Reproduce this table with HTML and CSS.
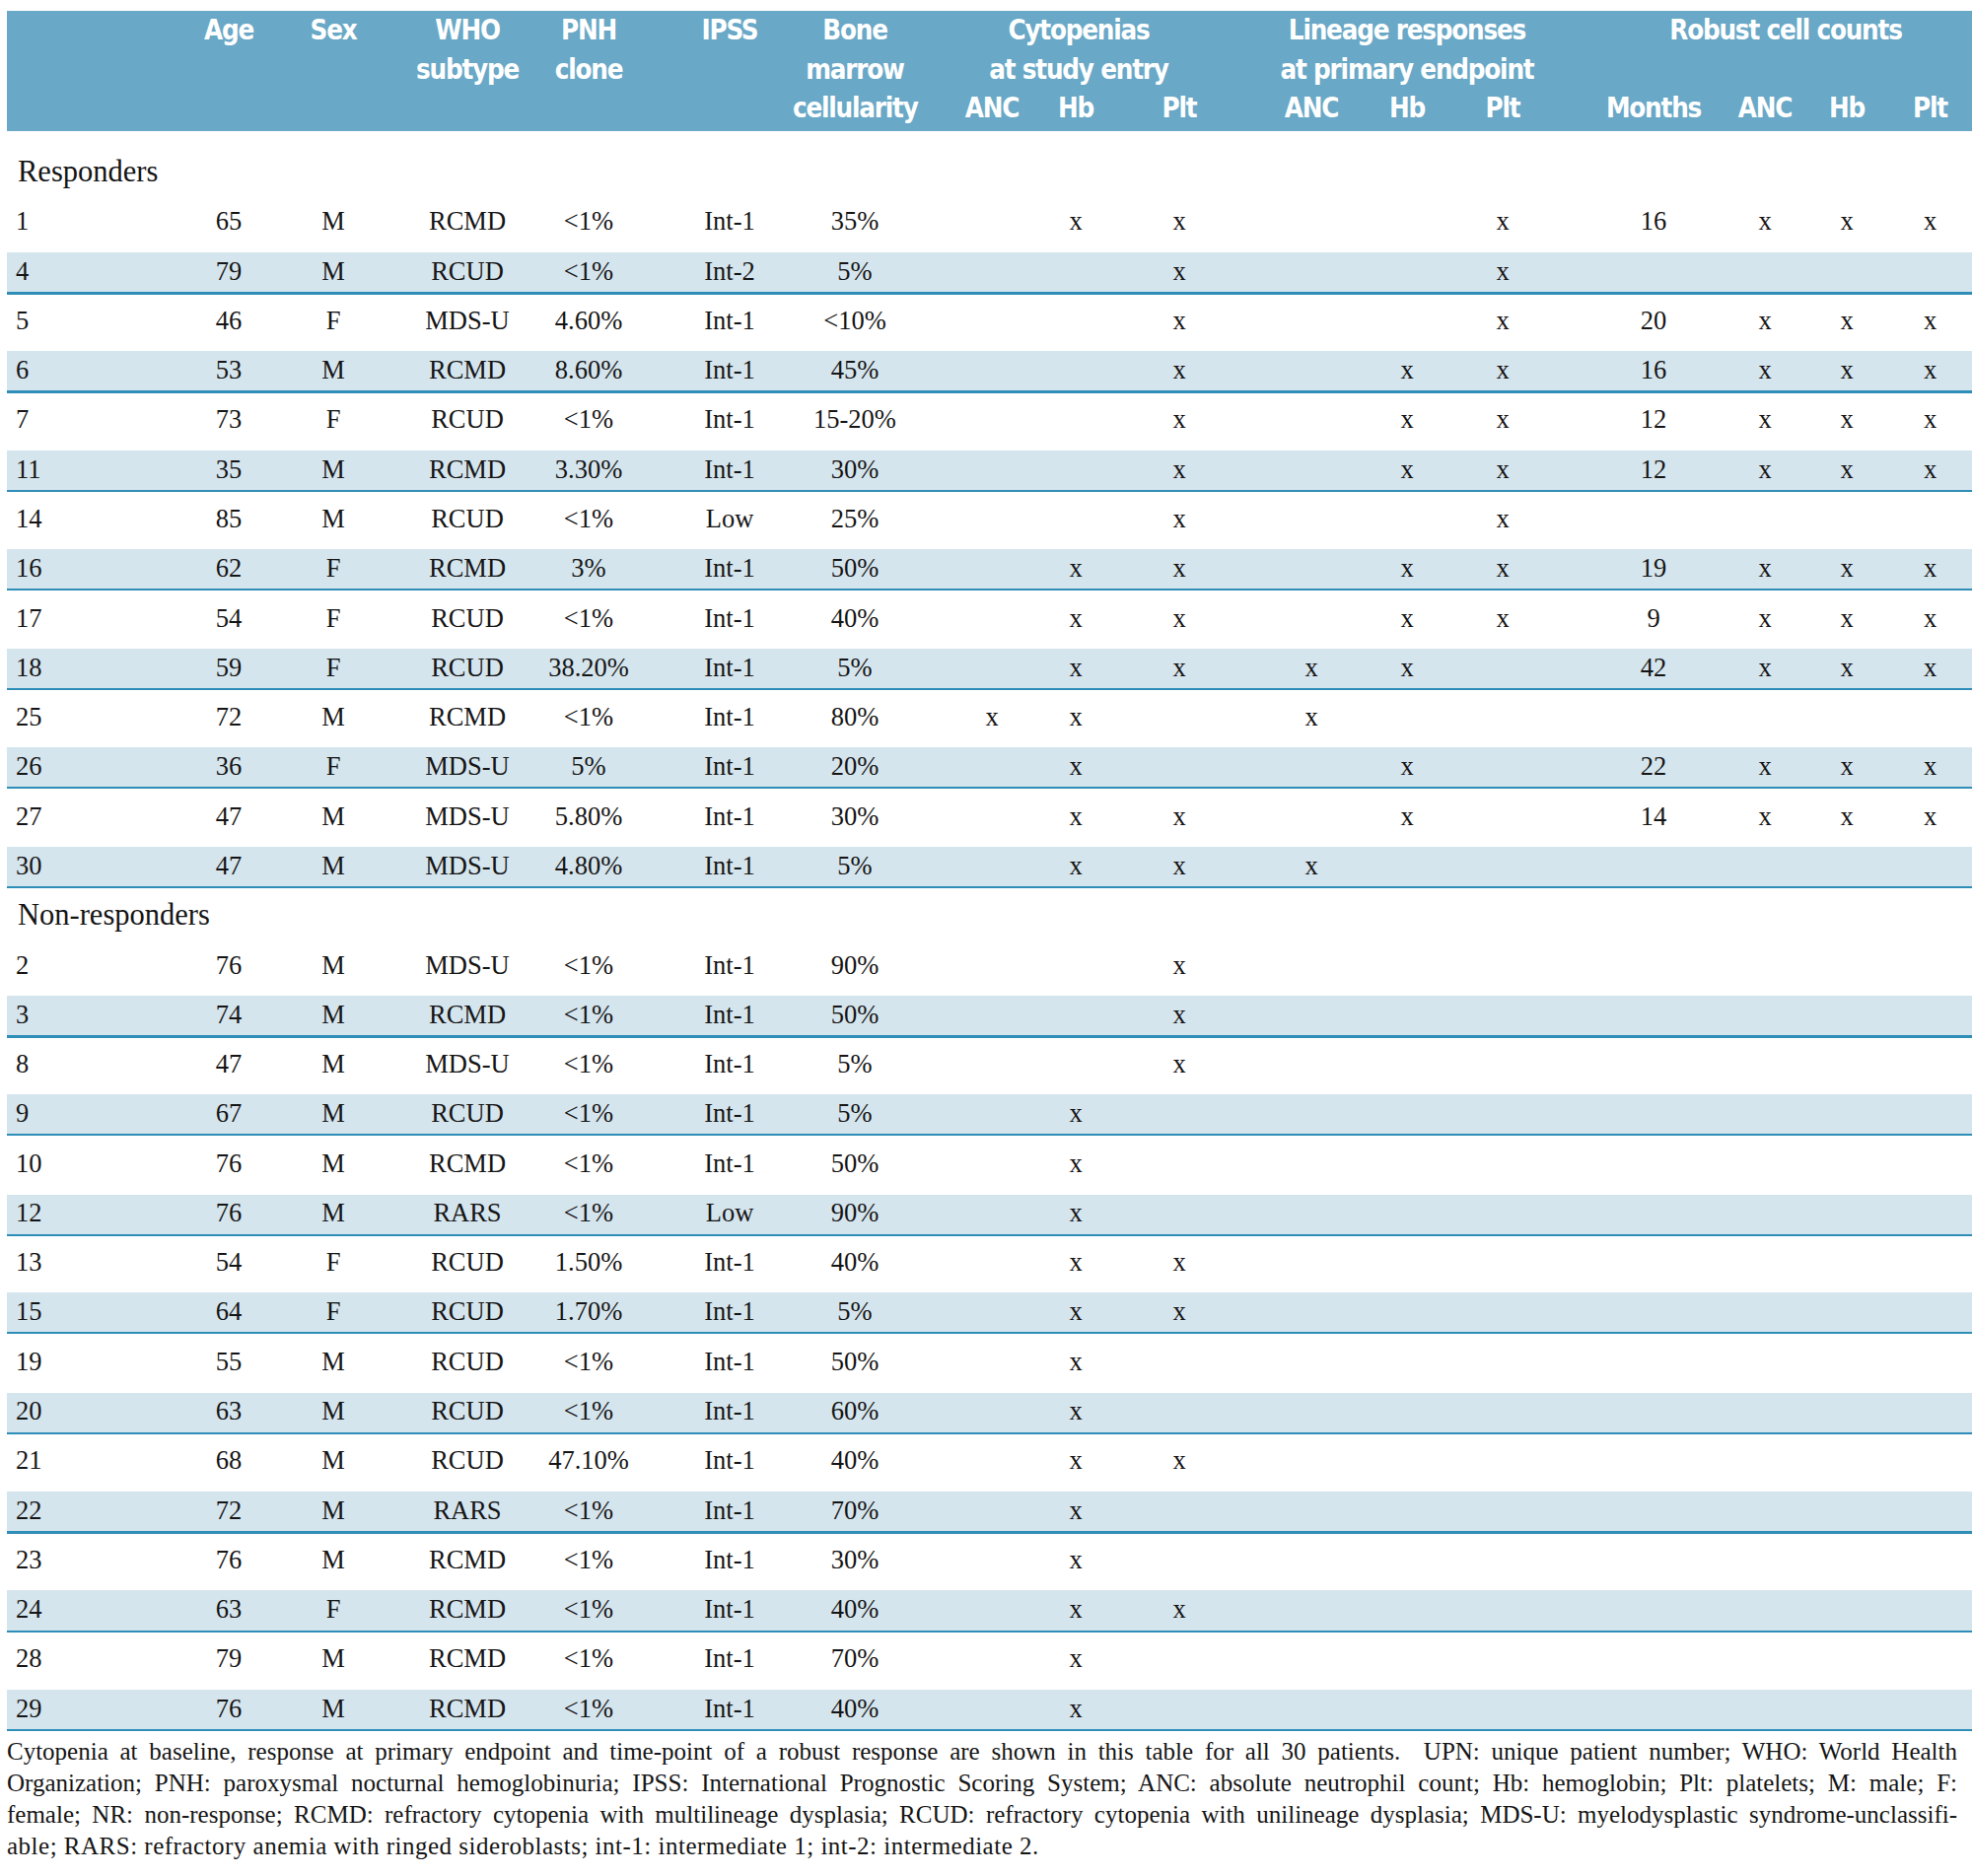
FILE: index.html
```html
<!DOCTYPE html>
<html lang="en">
<head>
<meta charset="utf-8">
<title>Patient responses</title>
<link rel="stylesheet" href="styles.css">
</head>
<body>
<div class="table">
  <div class="head cols">
    <div></div>
    <div>Age</div>
    <div>Sex</div>
    <div>WHO<br>subtype</div>
    <div>PNH<br>clone</div>
    <div>IPSS</div>
    <div>Bone<br>marrow<br>cellularity</div>
    <div class="grp g-cyt">
      <div class="gt">Cytopenias<br>at study entry</div>
      <div class="cyt-anc">ANC</div><div class="cyt-hb">Hb</div><div class="cyt-plt">Plt</div>
    </div>
    <div class="grp g-lin">
      <div class="gt">Lineage responses<br>at primary endpoint</div>
      <div class="lin-anc">ANC</div><div>Hb</div><div class="lin-plt">Plt</div>
    </div>
    <div class="grp g-rob">
      <div class="gt gt-rob">Robust cell counts</div>
      <div class="rob-mo">Months</div><div class="rob-anc">ANC</div><div>Hb</div><div>Plt</div>
    </div>
  </div>

  <div class="body">
    <div class="label">Responders</div>
    <div class="row cols"><span>1</span><span>65</span><span>M</span><span>RCMD</span><span>&lt;1%</span><span>Int-1</span><span>35%</span><span></span><span>x</span><span>x</span><span></span><span></span><span>x</span><span>16</span><span>x</span><span>x</span><span>x</span></div>
    <div class="row cols alt"><span>4</span><span>79</span><span>M</span><span>RCUD</span><span>&lt;1%</span><span>Int-2</span><span>5%</span><span></span><span></span><span>x</span><span></span><span></span><span>x</span></div>
    <div class="row cols"><span>5</span><span>46</span><span>F</span><span>MDS-U</span><span>4.60%</span><span>Int-1</span><span>&lt;10%</span><span></span><span></span><span>x</span><span></span><span></span><span>x</span><span>20</span><span>x</span><span>x</span><span>x</span></div>
    <div class="row cols alt"><span>6</span><span>53</span><span>M</span><span>RCMD</span><span>8.60%</span><span>Int-1</span><span>45%</span><span></span><span></span><span>x</span><span></span><span>x</span><span>x</span><span>16</span><span>x</span><span>x</span><span>x</span></div>
    <div class="row cols"><span>7</span><span>73</span><span>F</span><span>RCUD</span><span>&lt;1%</span><span>Int-1</span><span>15-20%</span><span></span><span></span><span>x</span><span></span><span>x</span><span>x</span><span>12</span><span>x</span><span>x</span><span>x</span></div>
    <div class="row cols alt"><span>11</span><span>35</span><span>M</span><span>RCMD</span><span>3.30%</span><span>Int-1</span><span>30%</span><span></span><span></span><span>x</span><span></span><span>x</span><span>x</span><span>12</span><span>x</span><span>x</span><span>x</span></div>
    <div class="row cols"><span>14</span><span>85</span><span>M</span><span>RCUD</span><span>&lt;1%</span><span>Low</span><span>25%</span><span></span><span></span><span>x</span><span></span><span></span><span>x</span></div>
    <div class="row cols alt"><span>16</span><span>62</span><span>F</span><span>RCMD</span><span>3%</span><span>Int-1</span><span>50%</span><span></span><span>x</span><span>x</span><span></span><span>x</span><span>x</span><span>19</span><span>x</span><span>x</span><span>x</span></div>
    <div class="row cols"><span>17</span><span>54</span><span>F</span><span>RCUD</span><span>&lt;1%</span><span>Int-1</span><span>40%</span><span></span><span>x</span><span>x</span><span></span><span>x</span><span>x</span><span>9</span><span>x</span><span>x</span><span>x</span></div>
    <div class="row cols alt"><span>18</span><span>59</span><span>F</span><span>RCUD</span><span>38.20%</span><span>Int-1</span><span>5%</span><span></span><span>x</span><span>x</span><span>x</span><span>x</span><span></span><span>42</span><span>x</span><span>x</span><span>x</span></div>
    <div class="row cols"><span>25</span><span>72</span><span>M</span><span>RCMD</span><span>&lt;1%</span><span>Int-1</span><span>80%</span><span>x</span><span>x</span><span></span><span>x</span></div>
    <div class="row cols alt"><span>26</span><span>36</span><span>F</span><span>MDS-U</span><span>5%</span><span>Int-1</span><span>20%</span><span></span><span>x</span><span></span><span></span><span>x</span><span></span><span>22</span><span>x</span><span>x</span><span>x</span></div>
    <div class="row cols"><span>27</span><span>47</span><span>M</span><span>MDS-U</span><span>5.80%</span><span>Int-1</span><span>30%</span><span></span><span>x</span><span>x</span><span></span><span>x</span><span></span><span>14</span><span>x</span><span>x</span><span>x</span></div>
    <div class="row cols alt"><span>30</span><span>47</span><span>M</span><span>MDS-U</span><span>4.80%</span><span>Int-1</span><span>5%</span><span></span><span>x</span><span>x</span><span>x</span></div>

    <div class="label">Non-responders</div>
    <div class="row cols"><span>2</span><span>76</span><span>M</span><span>MDS-U</span><span>&lt;1%</span><span>Int-1</span><span>90%</span><span></span><span></span><span>x</span></div>
    <div class="row cols alt"><span>3</span><span>74</span><span>M</span><span>RCMD</span><span>&lt;1%</span><span>Int-1</span><span>50%</span><span></span><span></span><span>x</span></div>
    <div class="row cols"><span>8</span><span>47</span><span>M</span><span>MDS-U</span><span>&lt;1%</span><span>Int-1</span><span>5%</span><span></span><span></span><span>x</span></div>
    <div class="row cols alt"><span>9</span><span>67</span><span>M</span><span>RCUD</span><span>&lt;1%</span><span>Int-1</span><span>5%</span><span></span><span>x</span></div>
    <div class="row cols"><span>10</span><span>76</span><span>M</span><span>RCMD</span><span>&lt;1%</span><span>Int-1</span><span>50%</span><span></span><span>x</span></div>
    <div class="row cols alt"><span>12</span><span>76</span><span>M</span><span>RARS</span><span>&lt;1%</span><span>Low</span><span>90%</span><span></span><span>x</span></div>
    <div class="row cols"><span>13</span><span>54</span><span>F</span><span>RCUD</span><span>1.50%</span><span>Int-1</span><span>40%</span><span></span><span>x</span><span>x</span></div>
    <div class="row cols alt"><span>15</span><span>64</span><span>F</span><span>RCUD</span><span>1.70%</span><span>Int-1</span><span>5%</span><span></span><span>x</span><span>x</span></div>
    <div class="row cols"><span>19</span><span>55</span><span>M</span><span>RCUD</span><span>&lt;1%</span><span>Int-1</span><span>50%</span><span></span><span>x</span></div>
    <div class="row cols alt"><span>20</span><span>63</span><span>M</span><span>RCUD</span><span>&lt;1%</span><span>Int-1</span><span>60%</span><span></span><span>x</span></div>
    <div class="row cols"><span>21</span><span>68</span><span>M</span><span>RCUD</span><span>47.10%</span><span>Int-1</span><span>40%</span><span></span><span>x</span><span>x</span></div>
    <div class="row cols alt"><span>22</span><span>72</span><span>M</span><span>RARS</span><span>&lt;1%</span><span>Int-1</span><span>70%</span><span></span><span>x</span></div>
    <div class="row cols"><span>23</span><span>76</span><span>M</span><span>RCMD</span><span>&lt;1%</span><span>Int-1</span><span>30%</span><span></span><span>x</span></div>
    <div class="row cols alt"><span>24</span><span>63</span><span>F</span><span>RCMD</span><span>&lt;1%</span><span>Int-1</span><span>40%</span><span></span><span>x</span><span>x</span></div>
    <div class="row cols"><span>28</span><span>79</span><span>M</span><span>RCMD</span><span>&lt;1%</span><span>Int-1</span><span>70%</span><span></span><span>x</span></div>
    <div class="row cols alt"><span>29</span><span>76</span><span>M</span><span>RCMD</span><span>&lt;1%</span><span>Int-1</span><span>40%</span><span></span><span>x</span></div>
  </div>

  <p class="note">
    <span class="ln">Cytopenia at baseline, response at primary endpoint and time-point of a robust response are shown in this table for all 30 patients.&nbsp; UPN: unique patient number; WHO: World Health</span>
    <span class="ln">Organization; PNH: paroxysmal nocturnal hemoglobinuria; IPSS: International Prognostic Scoring System; ANC: absolute neutrophil count; Hb: hemoglobin; Plt: platelets; M: male; F:</span>
    <span class="ln">female; NR: non-response; RCMD: refractory cytopenia with multilineage dysplasia; RCUD: refractory cytopenia with unilineage dysplasia; MDS-U: myelodysplastic syndrome-unclassifi-</span>
    <span class="ln last">able; RARS: refractory anemia with ringed sideroblasts; int-1: intermediate 1; int-2: intermediate 2.</span>
  </p>
</div>
</body>
</html>
```

FILE: styles.css
```css
* { box-sizing: border-box; }

html, body {
  margin: 0;
  padding: 0;
  background: #ffffff;
}

body {
  width: 2000px;
  height: 1903px;
  overflow: hidden;
  font-family: "Liberation Serif", "Times New Roman", serif;
  color: #151515;
}

.table {
  margin-left: 7px;
  padding-top: 11px;
  width: 1993px;
}

.cols {
  display: grid;
  grid-template-columns: 172px 106px 121px 130px 132px 136px 132px 112px 96px 119px 115px 98px 124px 134px 97px 84px 85px;
}

/* ---------- header ---------- */
.head {
  height: 122px;
  background: #69a8c6;
  color: #ffffff;
  font-family: "DejaVu Sans Condensed", "Liberation Sans", Arial, sans-serif;
  font-weight: bold;
  font-size: 27.5px;
  letter-spacing: -1.2px;
  line-height: 39.5px;
  text-align: center;
  white-space: nowrap;
}

.grp {
  display: grid;
  grid-template-rows: 79px 39.5px;
}
.g-cyt { grid-column: span 3; grid-template-columns: 112px 96px 119px; }
.g-lin { grid-column: span 3; grid-template-columns: 115px 98px 124px; }
.g-rob { grid-column: span 4; grid-template-columns: 134px 97px 84px 85px; }

.gt { grid-column: 1 / -1; }
.g-cyt .gt { padding-right: 11px; }
.g-lin .gt { padding-right: 9px; }
.gt-rob { padding-left: 22px; }

/* ---------- body rows ---------- */
.body {
  margin-top: 16px;
  font-size: 26.5px;
}

.label {
  height: 50.29px;
  line-height: 50.29px;
  padding-left: 11px;
  font-size: 30.5px;
}

.row {
  height: 50.29px;
  line-height: 50.29px;
  text-align: center;
  white-space: nowrap;
}

.row > :first-child {
  text-align: left;
  padding-left: 9px;
}

.alt {
  background: linear-gradient(to bottom,
    transparent 0, transparent 6.5px,
    #d5e5ee 6.5px, #d5e5ee 46.5px,
    #2f8eb7 46.5px, #2f8eb7 48.5px,
    transparent 48.5px);
}

/* fine horizontal centring of each column */
.row > :nth-child(3), .head > :nth-child(3) { padding-right: 15px; }
.row > :nth-child(4), .head > :nth-child(4) { padding-left: 6px; }
.row > :nth-child(5), .head > :nth-child(5) { padding-right: 10px; }
.row > :nth-child(6), .head > :nth-child(6) { padding-left: 8px; }
.row > :nth-child(7), .head > :nth-child(7) { padding-right: 6px; }
.row > :nth-child(8), .cyt-anc { padding-left: 28px; }
.row > :nth-child(9), .cyt-hb { padding-right: 10px; }
.row > :nth-child(10), .cyt-plt { padding-right: 15px; }
.row > :nth-child(11), .lin-anc { padding-left: 19px; }
.row > :nth-child(13), .lin-plt { padding-right: 28px; }
.row > :nth-child(14), .rob-mo { padding-left: 20px; }
.row > :nth-child(15), .rob-anc { padding-left: 15px; }

/* ---------- footnote ---------- */
.note {
  margin: 3px 0 0 0;
  width: 1978px;
  font-size: 25px;
  line-height: 32px;
}

.ln {
  display: block;
  text-align: justify;
  text-align-last: justify;
}

.ln.last {
  text-align-last: left;
  letter-spacing: 0.5px;
}
```
